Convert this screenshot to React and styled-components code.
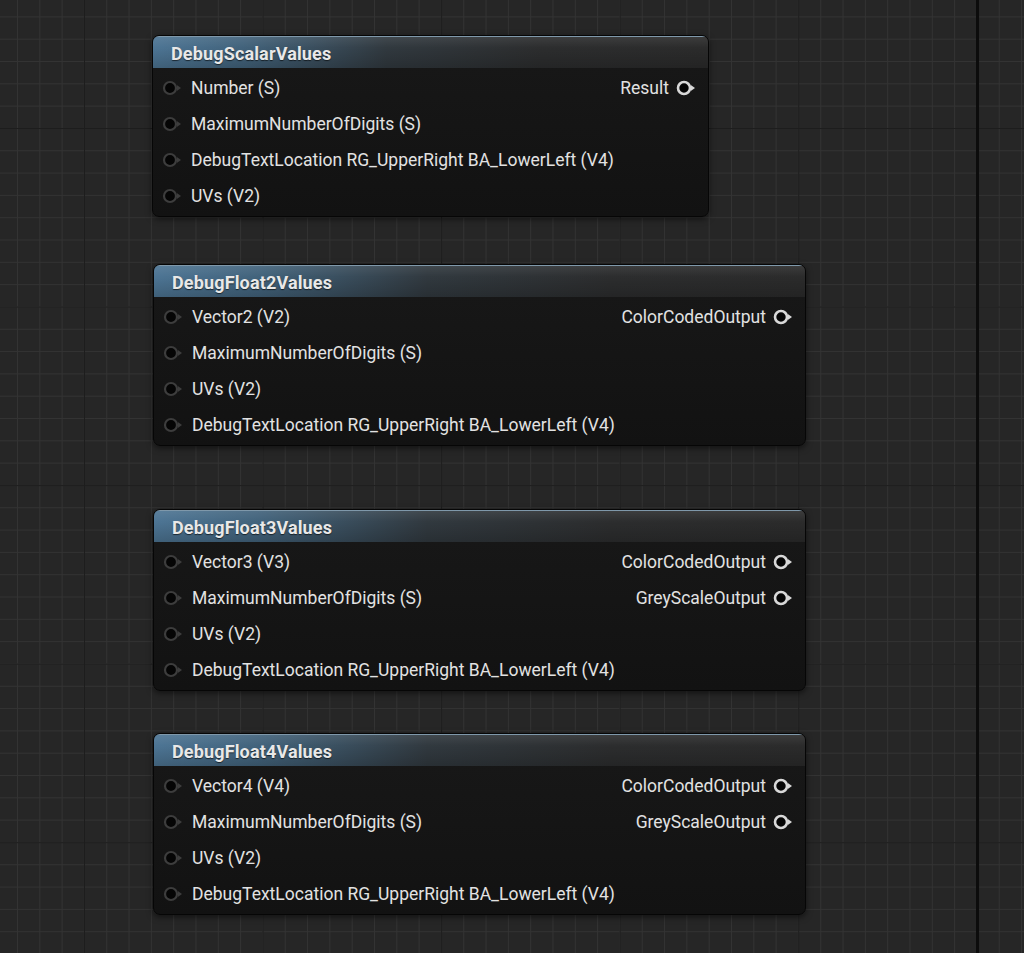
import React from 'react';
import styled, { createGlobalStyle } from 'styled-components';

const GlobalStyle = createGlobalStyle`
        html, body {
                margin: 0;
                padding: 0;
                background: #262626;
        }
        body {
                font-family: Roboto, 'Noto Sans', sans-serif;
        }
`;

// graph canvas: minor grid every 22.32px, major every 8 cells, origin line at x=977
const Canvas = styled.div`
        width: 1024px;
        height: 953px;
        overflow: hidden;
        box-sizing: border-box;
        padding: 35px 0 0 152px;
        display: flex;
        flex-direction: column;
        align-items: flex-start;
        background-color: #262626;
        background-image:
                linear-gradient(to right, transparent 976px, #0c0c0c 976px, #0c0c0c 979px, transparent 979px),
                linear-gradient(to right, #1d1d1d 1px, transparent 1px),
                linear-gradient(to bottom, #1d1d1d 1px, transparent 1px),
                linear-gradient(to right, #333 1px, transparent 1px),
                linear-gradient(to bottom, #333 1px, transparent 1px);
        background-size:
                100% 100%,
                178.56px 100%,
                100% 178.56px,
                22.32px 100%,
                100% 22.32px;
        background-position:
                0 0,
                84px 0,
                0 128px,
                17px 0,
                0 16.4px;
        background-repeat: no-repeat, repeat, repeat, repeat, repeat;
`;

const Node = styled.div`
        width: ${(p) => p.$width}px;
        margin-top: ${(p) => p.$offset || 0}px;
        margin-left: ${(p) => p.$shift || 0}px;
        border-radius: 7px;
        border: 1px solid #060606;
        background: linear-gradient(to bottom, #181818, #121212);
        box-shadow: 0 2px 6px rgba(0, 0, 0, 0.55);
        overflow: hidden;
        box-sizing: border-box;
`;

const Header = styled.div`
        height: 32px;
        display: flex;
        align-items: center;
        padding: 1px 0 0 18px;
        box-sizing: border-box;
        color: #e8e8e8;
        font-weight: 700;
        font-size: 18px;
        letter-spacing: 0.15px;
        border-top: 1px solid #7f98aa;
        background:
                linear-gradient(to bottom, rgba(255, 255, 255, 0.08), transparent 35%, rgba(0, 0, 0, 0.18)),
                linear-gradient(to right, #4d7594 0%, #42637c 16%, #31393f 42%, #2c2d2e 70%, #2b2b2b 100%);
        text-shadow: 0 1px 1px rgba(0, 0, 0, 0.6);
`;

const Body = styled.div`
        display: grid;
        grid-template-columns: 1fr auto;
        grid-auto-rows: 36px;
        padding: 2px 0 2px;
`;

const Cell = styled.div`
        display: flex;
        align-items: center;
        gap: 7px;
        font-size: 17.5px;
        color: #e2e2e2;
        white-space: nowrap;
        justify-content: ${(p) => (p.$out ? 'flex-end' : 'flex-start')};
        padding: ${(p) => (p.$out ? '0 10px 0 0' : '0 0 0 9px')};
        grid-column: ${(p) => (p.$out ? 2 : 1)};
`;

const PinSvg = styled.svg`
        flex: none;
        display: block;
`;

const PinIcon = ({ out }) => {
        const c = out ? '#d8d8d8' : '#3d3d3d';
        return (
                <PinSvg width="22" height="16" viewBox="0 0 22 16">
                        <circle cx="8" cy="8" r="6" fill="#050505" stroke={c} strokeWidth={out ? 2.6 : 2.2} />
                        <polygon points="14.8,5 19,8 14.8,11" fill={c} />
                </PinSvg>
        );
};

const nodes = [
        {
                title: 'DebugScalarValues',
                width: 557,
                offset: 0,
                shift: 0,
                inputs: ['Number (S)', 'MaximumNumberOfDigits (S)', 'DebugTextLocation RG_UpperRight BA_LowerLeft (V4)', 'UVs (V2)'],
                outputs: ['Result'],
        },
        {
                title: 'DebugFloat2Values',
                width: 653,
                offset: 47,
                shift: 1,
                inputs: ['Vector2 (V2)', 'MaximumNumberOfDigits (S)', 'UVs (V2)', 'DebugTextLocation RG_UpperRight BA_LowerLeft (V4)'],
                outputs: ['ColorCodedOutput'],
        },
        {
                title: 'DebugFloat3Values',
                width: 653,
                offset: 63,
                shift: 1,
                inputs: ['Vector3 (V3)', 'MaximumNumberOfDigits (S)', 'UVs (V2)', 'DebugTextLocation RG_UpperRight BA_LowerLeft (V4)'],
                outputs: ['ColorCodedOutput', 'GreyScaleOutput'],
        },
        {
                title: 'DebugFloat4Values',
                width: 653,
                offset: 42,
                shift: 1,
                inputs: ['Vector4 (V4)', 'MaximumNumberOfDigits (S)', 'UVs (V2)', 'DebugTextLocation RG_UpperRight BA_LowerLeft (V4)'],
                outputs: ['ColorCodedOutput', 'GreyScaleOutput'],
        },
];

function GraphNode({ node }) {
        return (
                <Node $width={node.width} $offset={node.offset} $shift={node.shift}>
                        <Header>{node.title}</Header>
                        <Body>
                                {node.inputs.map((label, i) => (
                                        <Cell key={'i' + i} style={{ gridRow: i + 1 }}>
                                                <PinIcon />
                                                <span>{label}</span>
                                        </Cell>
                                ))}
                                {node.outputs.map((label, i) => (
                                        <Cell key={'o' + i} $out style={{ gridRow: i + 1 }}>
                                                <span>{label}</span>
                                                <PinIcon out />
                                        </Cell>
                                ))}
                        </Body>
                </Node>
        );
}

export default function App() {
        return (
                <>
                        <GlobalStyle />
                        <Canvas>
                                {nodes.map((n) => (
                                        <GraphNode key={n.title} node={n} />
                                ))}
                        </Canvas>
                </>
        );
}
